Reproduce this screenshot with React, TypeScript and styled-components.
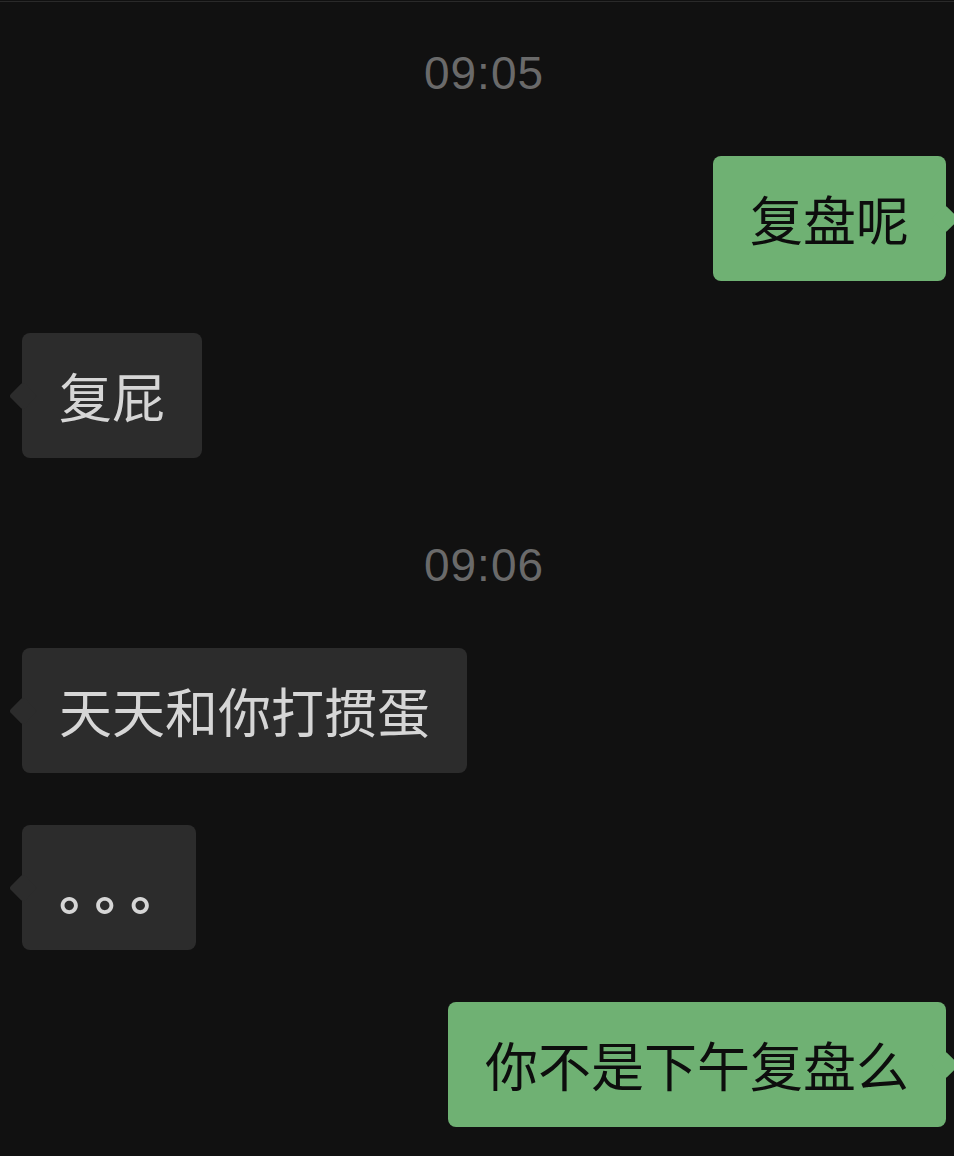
import styled, { createGlobalStyle } from "styled-components";

const Global = createGlobalStyle`
    html, body {
        margin: 0;
        padding: 0;
        background: #111111;
    }
    body {
        font-family: "Noto Sans CJK SC", "Liberation Sans", sans-serif;
    }
`;

const Screen = styled.div`
    width: 954px;
    min-height: 1156px;
    padding-top: 1px;
    background: #111111;
    overflow: hidden;
`;

const TopRule = styled.div`
    height: 1px;
    background: #2a2a2a;
`;

const Thread = styled.div`
    display: flex;
    flex-direction: column;
    gap: 52px;
    padding: 16px 8px 0 22px;
`;

const Time = styled.div`
    height: 60px;
    margin-top: 25px;
    display: flex;
    align-items: center;
    justify-content: center;
    font-family: "Liberation Sans", "Noto Sans CJK SC", sans-serif;
    font-size: 46px;
    letter-spacing: 1px;
    color: #6a6a6a;

    & + * {
        margin-top: 1px;
    }
`;

const Row = styled.div<{ $mine?: boolean }>`
    display: flex;
    justify-content: ${(p) => (p.$mine ? "flex-end" : "flex-start")};
`;

const Bubble = styled.div<{ $mine?: boolean; $dots?: boolean }>`
    position: relative;
    padding: 36px 37px;
    padding-right: ${(p) => (p.$dots ? "4px" : "37px")};
    border-radius: 8px;
    font-size: 53px;
    line-height: 53px;
    font-weight: ${(p) => (p.$dots ? 700 : 400)};
    white-space: nowrap;
    letter-spacing: ${(p) => (p.$dots ? "9px" : "0")};
    background: ${(p) => (p.$mine ? "#6fb173" : "#2c2c2c")};
    color: ${(p) => (p.$mine ? "#0d0d0d" : "#d6d6d6")};

    &::before {
        content: "";
        position: absolute;
        top: 50%;
        ${(p) => (p.$mine ? "right: -9px;" : "left: -9px;")}
        width: 20px;
        height: 20px;
        margin-top: -10px;
        border-radius: 3px;
        background: inherit;
        transform: rotate(45deg);
    }
`;

type Msg = { kind: "time"; text: string } | { kind: "msg"; text: string; mine?: boolean; dots?: boolean };

const messages: Msg[] = [
    { kind: "time", text: "09:05" },
    { kind: "msg", text: "复盘呢", mine: true },
    { kind: "msg", text: "复屁" },
    { kind: "time", text: "09:06" },
    { kind: "msg", text: "天天和你打掼蛋" },
    { kind: "msg", text: "。。。", dots: true },
    { kind: "msg", text: "你不是下午复盘么", mine: true },
];

function App() {
    return <>
        <Global />
        <Screen>
            <TopRule />
            <Thread>
                {messages.map((m, i) =>
                    m.kind === "time"
                        ? <Time key={i}>{m.text}</Time>
                        : <Row key={i} $mine={m.mine}>
                            <Bubble $mine={m.mine} $dots={m.dots}>{m.text}</Bubble>
                        </Row>
                )}
            </Thread>
        </Screen>
    </>
}

export default App;
